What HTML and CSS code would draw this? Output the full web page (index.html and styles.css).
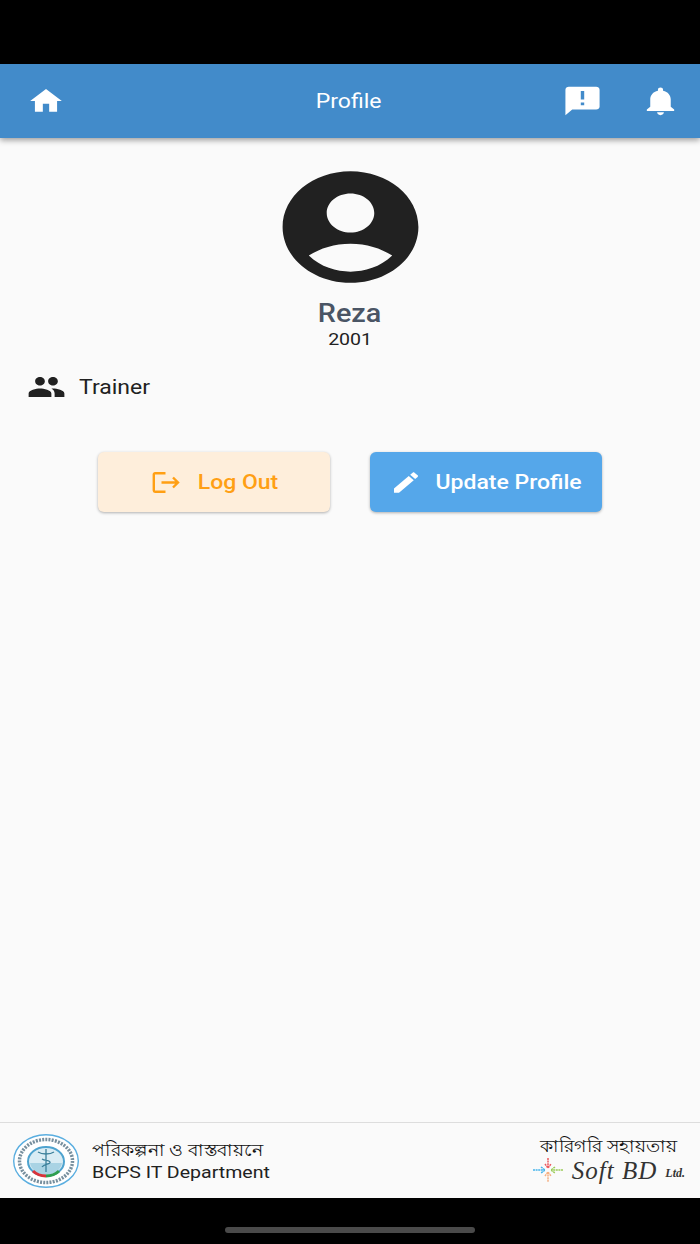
FILE: index.html
```html
<!DOCTYPE html>
<html lang="en">
<head>
  <meta charset="UTF-8">
  <meta name="viewport" content="width=device-width, initial-scale=1.0">
  <title>Profile</title>
  <link rel="stylesheet" href="styles.css">
</head>
<body>
  <div class="status-bar"></div>

  <header class="app-bar">
    <svg class="bar-icon home-icon" viewBox="0 0 24 24" preserveAspectRatio="none"><path d="M10 20v-6h4v6h5v-8h3L12 3 2 12h3v8z"/></svg>
    <div class="bar-title"><span class="wide">Profile</span></div>
    <svg class="bar-icon alert-icon" viewBox="0 0 24 24" preserveAspectRatio="none"><path d="M20 2H4c-1.1 0-1.99.9-1.99 2L2 22l4-4h14c1.1 0 2-.9 2-2V4c0-1.1-.9-2-2-2zm-7 9h-2V5h2v6zm0 4h-2v-2h2v2z"/></svg>
    <svg class="bar-icon bell-icon" viewBox="0 0 24 24" preserveAspectRatio="none"><path d="M12 22c1.1 0 2-.9 2-2h-4c0 1.1.89 2 2 2zm6-6v-5c0-3.07-1.64-5.64-4.5-6.32V4c0-.83-.67-1.5-1.5-1.5s-1.5.67-1.5 1.5v.68C7.63 5.36 6 7.92 6 11v5l-2 2v1h16v-1l-2-2z"/></svg>
  </header>

  <main class="content">
    <section class="profile-head">
      <svg class="avatar" viewBox="0 0 24 24" preserveAspectRatio="none"><path d="M12 2C6.48 2 2 6.48 2 12s4.48 10 10 10 10-4.48 10-10S17.52 2 12 2zm0 4c1.93 0 3.5 1.57 3.5 3.5S13.93 13 12 13s-3.5-1.57-3.5-3.5S10.07 6 12 6zm0 14c-2.03 0-4.43-.82-6.14-2.88C7.55 15.8 9.68 15 12 15s4.45.8 6.14 2.12C16.43 19.18 14.03 20 12 20z"/></svg>
      <div class="name"><span class="wide">Reza</span></div>
      <div class="user-id"><span class="wide">2001</span></div>
    </section>

    <div class="role">
      <svg class="role-icon" viewBox="0 0 24 24" preserveAspectRatio="none"><path d="M16 11c1.66 0 2.99-1.34 2.99-3S17.66 5 16 5c-1.66 0-3 1.34-3 3s1.34 3 3 3zm-8 0c1.66 0 2.99-1.34 2.99-3S9.66 5 8 5C6.34 5 5 6.34 5 8s1.34 3 3 3zm0 2c-2.33 0-7 1.17-7 3.5V19h14v-2.5c0-2.33-4.67-3.5-7-3.5zm8 0c-.29 0-.62.02-.97.05 1.16.84 1.97 1.97 1.97 3.45V19h6v-2.5c0-2.33-4.67-3.5-7-3.5z"/></svg>
      <span class="wide role-text">Trainer</span>
    </div>

    <div class="actions">
      <button class="btn btn-logout">
        <svg class="logout-icon" viewBox="0 0 28 21"><path d="M13.500 1.200H3a1.200 1.200 0 0 0-1.200 1.200v16.200a1.200 1.200 0 0 0 1.200 1.200h10.500M9.500 10.500H26M21 5.500l5 5-5 5" fill="none" stroke="currentColor" stroke-width="2.400"/></svg>
        <span class="wide btn-text">Log Out</span>
      </button>
      <button class="btn btn-update">
        <svg class="edit-icon" viewBox="0 0 24 24" preserveAspectRatio="none"><path d="M3 17.250V21h3.750L17.810 9.940l-3.750-3.750L3 17.250zM20.710 7.040c.39-.39.39-1.020 0-1.410l-2.340-2.340c-.39-.39-1.020-.39-1.410 0l-1.830 1.830 3.750 3.750 1.830-1.830z"/></svg>
        <span class="wide btn-text">Update Profile</span>
      </button>
    </div>
  </main>

  <footer class="credits">
    <div class="credit-left">
      <svg class="seal" viewBox="0 0 66 54">
        <ellipse cx="33" cy="27" rx="32.300" ry="26.300" fill="#fff" stroke="#5aaee0" stroke-width="1.400"/>
        <ellipse cx="33" cy="27" rx="26.500" ry="21.500" fill="none" stroke="#3d5f75" stroke-width="3.500" stroke-dasharray="2 1.200" opacity=".7"/>
        <ellipse cx="33" cy="27.500" rx="18" ry="14.500" fill="#d9ecf4" stroke="#4ea3cf" stroke-width="2"/>
        <path d="M17 29h32c-1 7-8 12-16 12s-15-5-16-12z" fill="#a9d3e4"/>
        <path d="M20 37c3 3 8 5 13 5" fill="none" stroke="#d8333a" stroke-width="3"/>
        <path d="M33 42c5 0 10-2 13-5" fill="none" stroke="#2f9e4f" stroke-width="3"/>
        <path d="M33 15v23M25 18c3 2 5 2 8 2s5 0 8-2M29 25c3 2 7 1 8 3s-6 2-8 5" fill="none" stroke="#3a7f9a" stroke-width="1.300"/>
      </svg>
      <div class="credit-lines">
        <div class="bn-line"><span class="bn-wide">পরিকল্পনা ও বাস্তবায়নে</span></div>
        <div class="dept"><span class="wide">BCPS IT Department</span></div>
      </div>
    </div>
    <div class="credit-right">
      <div class="bn-line support-line"><span class="bn-wide">কারিগরি সহায়তায়</span></div>
      <div class="softbd">
        <svg class="softbd-mark" viewBox="0 0 32 26">
          <path d="M16 1v10M13 7l3 4 3-4" fill="none" stroke="#ec5a5f" stroke-width="1.500" stroke-dasharray="2 .6"/>
          <path d="M16 15v10M13 19l3-4 3 4" fill="none" stroke="#f5b083" stroke-width="1.500" stroke-dasharray="2 .6"/>
          <path d="M1 13h12M9 10l4 3-4 3" fill="none" stroke="#45b4ec" stroke-width="1.500" stroke-dasharray="2 .6"/>
          <path d="M31 13H19M23 10l-4 3 4 3" fill="none" stroke="#9ccc5a" stroke-width="1.500" stroke-dasharray="2 .6"/>
        </svg>
        <span class="softbd-name">Soft BD</span>
        <span class="softbd-ltd">Ltd.</span>
      </div>
    </div>
  </footer>

  <div class="nav-bar"><div class="nav-pill"></div></div>
</body>
</html>
```

FILE: styles.css
```css
* {
  box-sizing: border-box;
}

body {
  margin: 0;
  height: 100vh;
  display: flex;
  flex-direction: column;
  background-color: #fafafa;
  font-family: Roboto, "Noto Sans", sans-serif;
  color: #212121;
  overflow: hidden;
}

/* the screenshot is stretched sideways, so text gets widened too */
.wide {
  display: inline-block;
  transform: scaleX(1.15);
  white-space: nowrap;
}

.bn-wide {
  display: inline-block;
  transform: scaleX(1.11);
  transform-origin: left center;
  white-space: nowrap;
}

.status-bar {
  height: 64px;
  background-color: #000;
}

.app-bar {
  height: 74px;
  display: flex;
  align-items: center;
  background-color: #428bca;
  box-shadow: 0 2px 6px rgba(0, 0, 0, 0.4);
  color: #fff;
  position: relative;
}

.bar-icon {
  fill: #fff;
  flex: none;
}

.home-icon {
  width: 38px;
  height: 32px;
  margin-left: 27px;
}

.bar-title {
  flex: 1;
  text-align: center;
  font-size: 20px;
  padding-left: 71px;
}

.alert-icon {
  width: 41px;
  height: 34px;
}

.bell-icon {
  width: 41px;
  height: 34px;
  margin-left: 37px;
  margin-right: 19px;
}

.content {
  flex: 1;
  padding-top: 22px;
}

.profile-head {
  display: flex;
  flex-direction: column;
  align-items: center;
}

.avatar {
  width: 163px;
  height: 134px;
  fill: #212121;
}

.name {
  margin-top: 6px;
  font-size: 25px;
  font-weight: 500;
  line-height: 28px;
  color: #4a5565;
}

.user-id {
  margin-top: 1px;
  font-size: 17px;
  line-height: 20px;
}

.role {
  display: flex;
  align-items: center;
  margin-top: 21px;
  padding-left: 27px;
}

.role-icon {
  width: 39px;
  height: 34px;
  fill: #212121;
}

.role-text {
  margin-left: 13px;
  font-size: 20px;
  transform-origin: left center;
}

.actions {
  display: flex;
  justify-content: center;
  gap: 40px;
  margin-top: 48px;
}

.btn {
  width: 232px;
  height: 60px;
  display: flex;
  align-items: center;
  justify-content: center;
  border: 0;
  border-radius: 6px;
  font-family: inherit;
  font-size: 20px;
  font-weight: 500;
  box-shadow: 0 1px 3px rgba(0, 0, 0, 0.3);
}

.btn-logout {
  background-color: #feeedb;
  color: #ff9f14;
  padding: 0 3px 0 0;
}

.btn-update {
  background-color: #55a7ea;
  color: #fff;
  padding: 0 10px 0 0;
}

.logout-icon {
  width: 28px;
  height: 21px;
  margin-right: 23px;
}

.edit-icon {
  width: 32px;
  height: 27px;
  fill: #fff;
  margin-right: 23px;
}

.credits {
  height: 76px;
  display: flex;
  justify-content: space-between;
  align-items: center;
  padding: 0 15px 0 13px;
  border-top: 1px solid #ddd;
  background-color: #fafafa;
}

.credit-left {
  display: flex;
  align-items: center;
}

.seal {
  width: 66px;
  height: 54px;
}

.credit-lines {
  margin-left: 13px;
}

.bn-line {
  font-family: "Noto Sans", sans-serif;
  font-size: 17px;
  line-height: 22px;
  color: #111;
}

.dept {
  font-size: 17px;
  line-height: 22px;
}

.dept .wide {
  transform-origin: left center;
}

.credit-right {
  display: flex;
  flex-direction: column;
  align-items: flex-end;
  margin-top: -2px;
}

.support-line {
  align-self: flex-start;
  margin-left: 8px;
}

.softbd {
  display: flex;
  align-items: center;
  color: #333;
  font-family: "Liberation Serif", serif;
  font-style: italic;
}

.softbd-mark {
  width: 32px;
  height: 26px;
  margin-right: 8px;
  margin-top: -2px;
}

.softbd-name {
  font-size: 25px;
  letter-spacing: 1px;
}

.softbd-ltd {
  font-size: 12px;
  font-weight: bold;
  margin-left: 8px;
  margin-top: 6px;
}

.nav-bar {
  height: 46px;
  display: flex;
  justify-content: center;
  background-color: #000;
  padding-top: 29px;
}

.nav-pill {
  width: 250px;
  height: 6px;
  border-radius: 3px;
  background-color: #4a4a4a;
}
```
